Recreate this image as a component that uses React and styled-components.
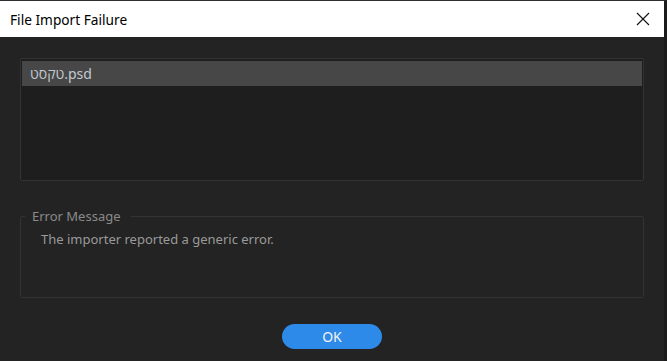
import React from "react";
import styled, { createGlobalStyle } from "styled-components";

const Global = createGlobalStyle`
  html, body { margin: 0; padding: 0; background: #232323; }
  body { width: 667px; height: 361px; overflow: hidden; }
`;

const Frame = styled.div`
  box-sizing: border-box;
  width: 667px;
  height: 361px;
  display: flex;
  flex-direction: column;
  background: #232323;
  border-top: 1px solid #2e2e2e;
  border-right: 3px solid #1b1b1b;
`;

const TitleBar = styled.div`
  height: 36px;
  flex: none;
  background: #ffffff;
  display: flex;
  align-items: center;
  justify-content: space-between;
  padding: 0 14px 0 10px;
`;

const Title = styled.span`
  font-family: "Noto Sans", "Open Sans", sans-serif;
  font-size: 13.7px;
  color: #000000;
`;

const CloseButton = styled.button`
  width: 14px;
  height: 14px;
  padding: 0;
  border: none;
  background: transparent;
  display: flex;
  align-items: center;
  justify-content: center;
`;

const Body = styled.div`
  flex: 1;
  display: flex;
  flex-direction: column;
  padding: 21px 20px 0 20px;
  font-family: "Noto Sans", "Open Sans", sans-serif;
`;

const ListBox = styled.div`
  box-sizing: border-box;
  height: 123px;
  background: #1e1e1e;
  border: 1px solid #323232;
  border-radius: 2px;
  padding: 2px 1px;
`;

const ListItem = styled.div`
  height: 25px;
  display: flex;
  align-items: center;
  padding-left: 8px;
  background: ${(p) => (p.$selected ? "#474747" : "transparent")};
  color: #c3c8cf;
  font-size: 14px;
`;

const Group = styled.fieldset`
  box-sizing: border-box;
  margin: 28px 0 0 0;
  height: 89px;
  padding: 0 0 0 4px;
  border: 1px solid #333333;
  border-radius: 2px;
`;

const Legend = styled.legend`
  margin-left: 0;
  padding: 0 10px 0 7px;
  color: #8a8a8a;
  font-size: 13px;
  line-height: 14px;
`;

const Message = styled.div`
  margin-top: 7px;
  padding-left: 16px;
  color: #9a9a9a;
  font-size: 13px;
`;

const Footer = styled.div`
  display: flex;
  justify-content: center;
  padding-top: 26px;
`;

const OkButton = styled.button`
  width: 100px;
  height: 25px;
  border: none;
  border-radius: 13px;
  background: #2d8ae8;
  color: #f2f2f2;
  font-family: "Noto Sans", "Open Sans", sans-serif;
  font-size: 14px;
  padding: 0;
`;

export default function App() {
  return (
    <>
      <Global />
      <Frame>
        <TitleBar>
          <Title>File Import Failure</Title>
          <CloseButton aria-label="Close">
            <svg width="14" height="14" viewBox="0 0 14 14">
              <path d="M1 1 L13 13 M13 1 L1 13" stroke="#111" strokeWidth="1.1" fill="none" />
            </svg>
          </CloseButton>
        </TitleBar>
        <Body>
          <ListBox>
            <ListItem $selected>טקסט.psd</ListItem>
          </ListBox>
          <Group>
            <Legend>Error Message</Legend>
            <Message>The importer reported a generic error.</Message>
          </Group>
          <Footer>
            <OkButton>OK</OkButton>
          </Footer>
        </Body>
      </Frame>
    </>
  );
}
